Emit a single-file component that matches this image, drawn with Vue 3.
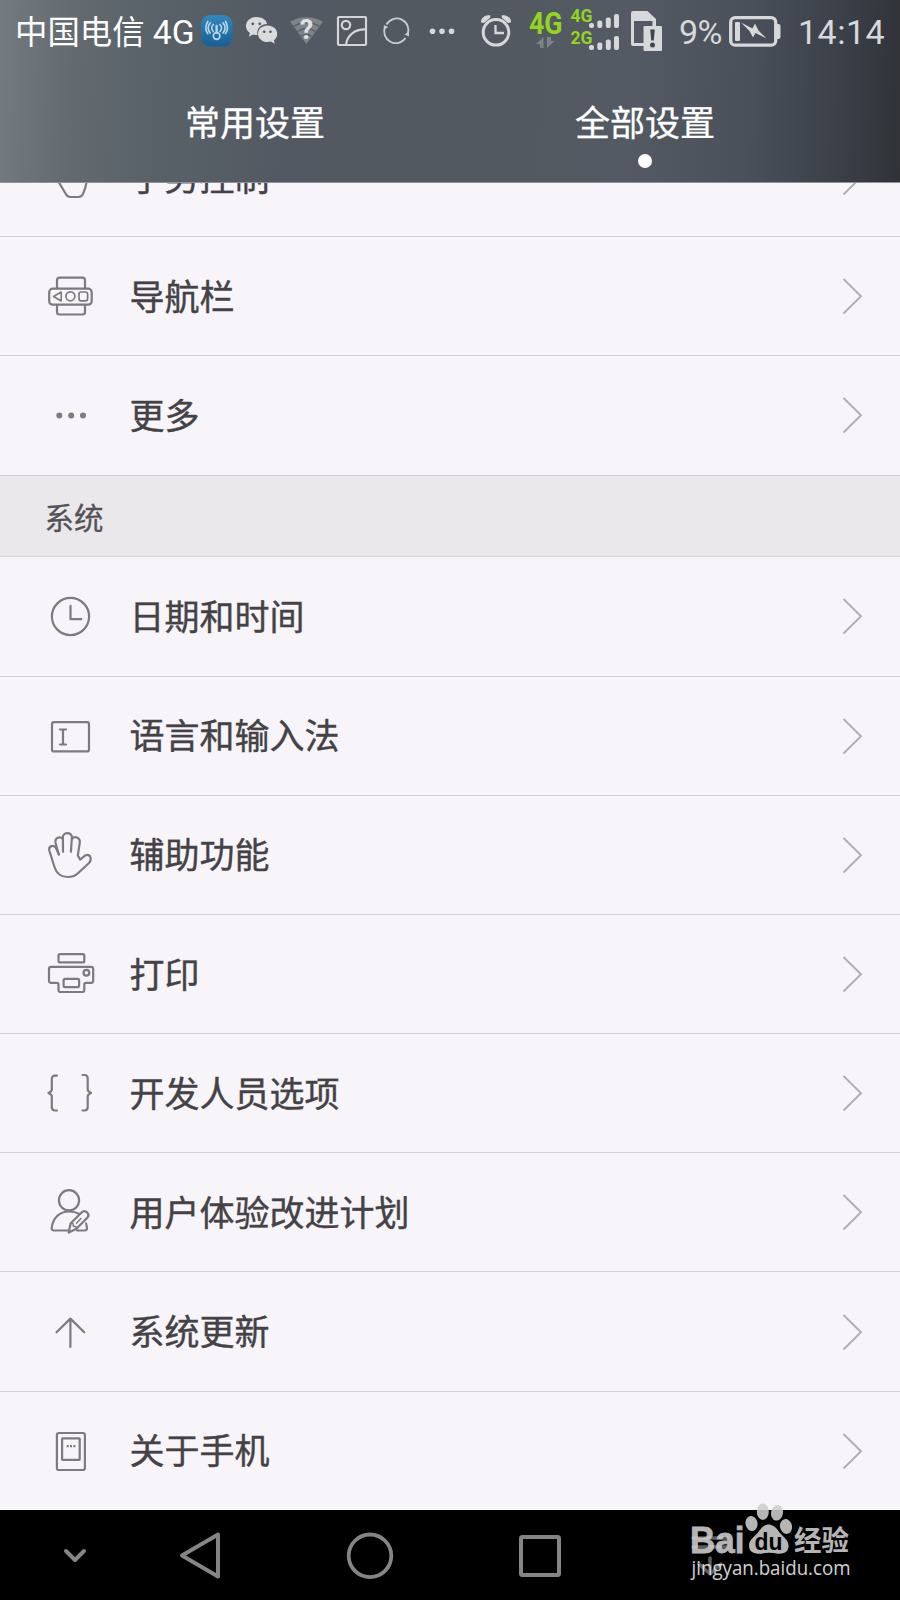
<!-- App.vue 系统设置 -->
<template>
  <div class="phone">
    <header class="header">
      <!-- 状态栏 -->
      <div class="status-bar">
        <span class="carrier">中国电信 <span class="latin">4G</span></span>

        <!-- 热点应用 -->
        <svg class="status-icon" width="40" height="62" viewBox="0 0 40 62">
          <defs>
            <linearGradient id="appBlue" x1="0" y1="0" x2="0" y2="1">
              <stop offset="0" stop-color="#3188bd" />
              <stop offset="1" stop-color="#175f96" />
            </linearGradient>
          </defs>
          <rect x="0" y="15" width="31.5" height="31.5" rx="9" fill="url(#appBlue)" />
          <g fill="none" stroke="#b9d6e8" stroke-width="1.7" stroke-linecap="round">
            <circle cx="15.6" cy="36" r="3.3" />
            <path d="M15.6 32.5V26" stroke-width="2.4" />
            <path d="M12.3 24.5c-2 2-2 5 0 7M9.3 22.8c-2.8 3-2.8 7.3 0 10.2M6.800 21.5c-2.600 4-2.600 9 0 12" />
            <path d="M19 24.5c2 2 2 5 0 7M22 22.8c2.8 3 2.8 7.3 0 10.2M24.500 21.5c2.600 4 2.600 9 0 12" />
          </g>
        </svg>

        <!-- 微信 -->
        <svg class="status-icon" width="48" height="62" viewBox="0 0 48 62">
          <path
            d="M15.5 17c-6 0-10.5 3.9-10.5 9 0 3 1.5 5.4 4 7l-1.2 3.8 4.300-2.300c1.5.4 3 .5 4.400.4-1.400-6.400 3.500-11 9.500-11C25.500 19.800 21 17 15.500 17z"
            fill="#d9dadc"
          />
          <path
            d="M26.5 25.5c-5.3 0-9.5 3.6-9.5 8.2s4.2 8.3 9.5 8.3c1.2 0 2.3-.2 3.4-.5l4 2.2-1-3.4c2-1.6 3.3-3.9 3.3-6.6 0-4.6-4.4-8.2-9.7-8.2z"
            fill="#d9dadc"
          />
          <g fill="#4f5760">
            <circle cx="11.8" cy="23.8" r="1.4" />
            <circle cx="18.8" cy="23.8" r="1.4" />
            <circle cx="23.2" cy="31.8" r="1.3" />
            <circle cx="29.5" cy="31.8" r="1.3" />
          </g>
        </svg>

        <!-- 无线网络 -->
        <svg class="status-icon" width="46" height="62" viewBox="0 0 46 62">
          <path d="M1 21.5Q17.5 13 34 21.5L17.5 44z" fill="#7d848a" />
          <g fill="none" stroke="#596169" stroke-width="1.4">
            <path d="M4.500 26.5Q17.5 18.5 30.5 26.5" />
            <path d="M8.500 31.5Q17.5 25.5 26.5 31.5" />
            <path d="M12 36.5Q17.5 32.5 23 36.5" />
          </g>
          <text class="wifi-mark" x="17.5" y="39">?</text>
        </svg>

        <!-- 图片 -->
        <svg class="status-icon" width="46" height="62" viewBox="0 0 46 62">
          <g fill="none" stroke="#d3d5d8" stroke-width="2.2">
            <rect x="3" y="17" width="28" height="28" rx="1" />
            <circle cx="11" cy="25" r="4.2" />
            <path d="M11 45C12 35 20 29 31 29.5" />
          </g>
        </svg>

        <!-- 同步 -->
        <svg class="status-icon" width="46" height="62" viewBox="0 0 46 62">
          <g fill="none" stroke="#c9ccd0" stroke-width="1.8">
            <path d="M5.5 24.5A11.7 11.7 0 0 1 26.6 34.5" />
            <path d="M24.5 38A11.7 11.7 0 0 1 4 27" />
          </g>
          <path d="M28 31.5v5l-4.500-2zM2.800 30l0-5 4.400 2z" fill="#c9ccd0" />
        </svg>

        <!-- 更多通知 -->
        <svg class="status-icon" width="52" height="62" viewBox="0 0 52 62">
          <g fill="#d6d8da">
            <circle cx="5.5" cy="31.2" r="2.8" />
            <circle cx="15" cy="31.2" r="2.8" />
            <circle cx="24.5" cy="31.2" r="2.8" />
          </g>
        </svg>

        <!-- 闹钟 -->
        <svg class="status-icon" width="50" height="62" viewBox="0 0 50 62">
          <g fill="none" stroke="#d6d8da">
            <circle cx="17" cy="32.3" r="12.8" stroke-width="3" />
            <path d="M16.5 25v8H25" stroke-width="2.3" />
          </g>
          <path d="M2 22.5C1.5 18 6.5 14 11.5 15.5L11 18 5 23z" fill="#d6d8da" />
          <path d="M32 22.5C32.5 18 27.5 14 22.5 15.5L23 18 29 23z" fill="#d6d8da" />
        </svg>

        <!-- 移动网络 -->
        <svg class="status-icon" width="41" height="62" viewBox="0 0 41 62">
          <text class="net-large" x="0" y="33.5" textLength="33.5" lengthAdjust="spacingAndGlyphs">4G</text>
          <path d="M14.5 37v11H11v-4H7zM18 37v11l7.5-7H22v-4z" fill="#7d8389" />
        </svg>

        <!-- 双卡信号 -->
        <svg class="status-icon" width="61" height="62" viewBox="0 0 61 62">
          <text class="net-small" x="0.5" y="22" textLength="22" lengthAdjust="spacingAndGlyphs">4G</text>
          <text class="net-small" x="0.5" y="43.7" textLength="22" lengthAdjust="spacingAndGlyphs">2G</text>
          <g fill="#d6d8da">
            <template v-for="top in [0, 22]" :key="top">
              <rect x="19" :y="top + 23" width="5" height="5" rx="2" />
              <rect x="27.3" :y="top + 20.5" width="5" height="7.5" rx="2" />
              <rect x="35.8" :y="top + 17.5" width="5" height="10.5" rx="2" />
              <rect x="44" :y="top + 14" width="5" height="14" rx="2" />
            </template>
          </g>
        </svg>

        <!-- SIM 卡提示 -->
        <svg class="status-icon" width="48" height="62" viewBox="0 0 48 62">
          <path d="M0 13a2 2 0 0 1 2-2h14.5L25 19v7h-3.500v-5H3v22h10v3H2a2 2 0 0 1-2-2z" fill="#d6d8da" />
          <rect x="12.5" y="26" width="18.5" height="25" rx="1" fill="#d6d8da" />
          <path d="M19.2 29.5h4.600l-1 11h-2.600z" fill="#3f464e" />
          <circle cx="21.5" cy="45" r="2.5" fill="#3f464e" />
        </svg>

        <span class="percent">9%</span>

        <!-- 电池 -->
        <svg class="status-icon" width="69" height="62" viewBox="0 0 69 62">
          <rect x="1.7" y="17.7" width="45" height="27.5" rx="4.5" fill="none" stroke="#d6d8da" stroke-width="3.3" />
          <path d="M48 24h1.5a2 2 0 0 1 2 2v11a2 2 0 0 1-2 2H48z" fill="#d6d8da" />
          <rect x="6" y="22" width="5" height="19" rx="1" fill="#d6d8da" />
          <path d="M12 22.5L23.5 28.5 26 23.5 29.5 30.5 37.5 38.5 26.5 33 24 37.5 20.5 31z" fill="#d6d8da" />
        </svg>

        <span class="clock">14:14</span>
      </div>

      <!-- 标签页 -->
      <nav class="tabs">
        <button
          v-for="tab in tabs"
          :key="tab.key"
          class="tab"
          :class="{ active: tab.key === activeTab }"
          @click="activeTab = tab.key"
        >
          {{ tab.label }}
          <i class="tab-dot"></i>
        </button>
      </nav>
    </header>

    <!-- 设置列表 -->
    <main class="settings">
      <section v-for="group in groups" :key="group.key" class="group" :class="group.key">
        <h2 v-if="group.title" class="group-title">{{ group.title }}</h2>
        <div v-for="item in group.items" :key="item.icon" class="row">
          <svg class="row-icon" width="64" height="64" viewBox="0 0 64 64">
            <g v-if="item.icon === 'gesture'">
              <path d="M20 37.6L27 49.3Q28.5 52 31.5 52H39.5Q43 52 44.2 48.5Q46.7 43 47.7 36V26Q44 23 41 25Q37 22 33 24V12Q30 9 27 12V33L20 29Q16 31 20 37.6Z" />
            </g>
            <g v-else-if="item.icon === 'navbar'">
              <path d="M18 24.5V16.5Q18 13.7 20.5 13.7H43.5Q46 13.7 46 16.5V24.5" />
              <path d="M18 41V48Q18 50.5 20.5 50.5H43.5Q46 50.5 46 48V41" />
              <rect x="10.2" y="24.7" width="42.5" height="16" rx="3.5" />
              <path d="M22.2 28V37L14.500 32.5Z" stroke-width="1.6" />
              <circle cx="31.4" cy="32.3" r="4.5" stroke-width="1.7" />
              <rect x="40" y="28" width="8.6" height="8.8" rx="2" stroke-width="1.7" />
            </g>
            <g v-else-if="item.icon === 'more'" class="solid">
              <circle cx="20.3" cy="32.5" r="3" />
              <circle cx="32.2" cy="32.5" r="3" />
              <circle cx="44" cy="32.5" r="3" />
            </g>
            <g v-else-if="item.icon === 'clock'">
              <circle cx="31.5" cy="32.5" r="18.6" />
              <path d="M31.5 21.8V35.2H42.3" />
            </g>
            <g v-else-if="item.icon === 'language'">
              <rect x="13" y="18.2" width="37" height="29.2" rx="2" />
              <path d="M21 25.5H27M24 25.5V40.5M21 40.5H27" />
            </g>
            <g v-else-if="item.icon === 'hand'">
              <path d="M20 31.5L17 25C15 21.2 9.2 23 10.3 27.5L15.5 44C17.5 50.5 22.5 54 28.7 54C33.5 54 37 52.3 39.5 49.8L50 40C53.5 36 51 31.7 48 31.9C45.5 32 43.5 35 41.2 36.7L38.8 32.5L40.8 19.5C41.3 14.2 35.5 12.8 32.9 16" />
              <path d="M24 28.8L23.9 14C24 8.8 33 8.8 32.9 14L31.9 28.8" />
              <path d="M19.7 31.5L16.6 20C15.5 14.6 21 12.8 24 16" />
            </g>
            <g v-else-if="item.icon === 'printer'">
              <rect x="19.5" y="12.2" width="25.8" height="8.2" rx="1.5" />
              <path d="M12.2 24.9H52Q54.2 24.9 54.2 27V38.5Q54.2 40.8 52 40.8H47Q45.3 40.8 45.3 42.5V48Q45.3 50 43.3 50H21.5Q19.5 50 19.5 48V42.5Q19.5 40.8 17.8 40.8H12.2Q10 40.8 10 38.5V27Q10 24.9 12.2 24.9Z" />
              <rect x="24.6" y="36.9" width="15.5" height="8.2" rx="1.5" />
              <circle cx="47.4" cy="30.8" r="2.9" />
            </g>
            <g v-else-if="item.icon === 'braces'">
              <path d="M18 14.6H16Q12.8 14.6 12.8 18V28.5Q12.8 30.5 9.5 32.1Q12.8 33.5 12.8 35.5V46Q12.8 49.5 16 49.5H18" />
              <path d="M43.5 14H45.5Q48.7 14 48.7 17.5V28.5Q48.7 30.5 52 32.1Q48.7 33.5 48.7 35.5V46Q48.7 49.5 45.5 49.5H43.5" />
            </g>
            <g v-else-if="item.icon === 'user'">
              <circle cx="30" cy="20.300" r="10.1" />
              <path d="M29.5 50.5H15Q12.5 50.5 12.7 48C14 37.5 21 31.5 30 31.5Q36 31.5 40.5 34M47 43.5Q48 46.5 48 49Q47.5 50.5 46 50.5H38" />
              <path d="M29.7 52.5L31.6 43.5L42.8 32.2C44.5 30.5 46.5 31 48 32.3C50 34.2 50 35.8 48.5 37.5L37.5 48.8Z" />
              <path d="M31.6 43.5L34 43.5L34.5 46.5L37 46.5L37.5 48.8M37.5 43.2L42 38.5" stroke-width="1.5" />
            </g>
            <g v-else-if="item.icon === 'update'">
              <path d="M31.4 47V18.6M17.5 32.3L31.4 18.6L45.2 32.3" />
            </g>
            <g v-else-if="item.icon === 'about'">
              <rect x="17.9" y="14" width="28" height="37" rx="2" />
              <rect x="23.1" y="19.3" width="17.6" height="21.5" rx="0.5" />
              <path d="M27.7 27.2h2M31 27.2h2M34.3 27.2h2" stroke-linecap="butt" />
            </g>
          </svg>
          <span class="row-label">{{ item.label }}</span>
          <svg class="chevron" width="22" height="38" viewBox="0 0 22 38">
            <path d="M1.500 2L19 19.200L1.500 36.500" />
          </svg>
        </div>
      </section>
    </main>

    <!-- 导航键 -->
    <footer class="nav-bar">
      <svg width="30" height="20" viewBox="0 0 30 20">
        <path d="M6 6L15 15L24 6" stroke-width="4" />
      </svg>
      <svg width="50" height="56" viewBox="0 0 50 56">
        <path d="M43 7.500V49.500L7 28.500Z" stroke-width="4" />
      </svg>
      <svg width="50" height="56" viewBox="0 0 50 56">
        <circle cx="25" cy="28.8" r="21.3" stroke-width="3.8" />
      </svg>
      <svg width="50" height="56" viewBox="0 0 50 56">
        <rect x="6" y="10" width="38" height="38" rx="1.5" stroke-width="4" />
      </svg>
      <svg class="drawer-key" width="50" height="56" viewBox="0 0 50 56">
        <path d="M8 11H42M8 20H42M25 31V47M14 37L25 47L36 37" stroke-width="3.5" />
      </svg>
    </footer>

    <!-- 水印 -->
    <svg class="watermark" width="180" height="90" viewBox="0 0 180 90">
      <text class="wm-brand" x="10" y="52.5" textLength="54.5" lengthAdjust="spacingAndGlyphs">Bai</text>
      <g class="wm-paw">
        <ellipse cx="71.5" cy="23.5" rx="6" ry="7.5" transform="rotate(-10 71.5 23.5)" />
        <ellipse cx="82.8" cy="11.8" rx="6" ry="8.2" />
        <ellipse cx="97" cy="12.8" rx="6" ry="7.8" transform="rotate(10 97 12.8)" />
        <ellipse cx="106" cy="26.5" rx="6" ry="7.5" transform="rotate(-12 106 26.5)" />
        <path d="M88.5 24.5C93.5 24.5 97 28.5 99.5 32.5C103 37 108.5 39.5 108.5 46C108.5 52 104 54 98 53.7C92 52.5 86 52.5 81 53.7C74.5 54 69 52.5 69 45.5C69 39.5 74.5 37 78 32.5C80.5 28.5 84 24.5 88.5 24.5Z" />
      </g>
      <text class="wm-du" x="74.5" y="49.5" textLength="28" lengthAdjust="spacingAndGlyphs">du</text>
      <text class="wm-cn" x="114" y="51" textLength="55" lengthAdjust="spacingAndGlyphs">经验</text>
      <text class="wm-url" x="11.5" y="74.5" textLength="159" lengthAdjust="spacingAndGlyphs">jingyan.baidu.com</text>
    </svg>
  </div>
</template>

<script setup>
import { ref } from 'vue'

const activeTab = ref('all')

const tabs = [
  { key: 'common', label: '常用设置' },
  { key: 'all', label: '全部设置' }
]

const groups = [
  {
    key: 'personal',
    items: [
      { icon: 'gesture', label: '手势控制' },
      { icon: 'navbar', label: '导航栏' },
      { icon: 'more', label: '更多' }
    ]
  },
  {
    key: 'system',
    title: '系统',
    items: [
      { icon: 'clock', label: '日期和时间' },
      { icon: 'language', label: '语言和输入法' },
      { icon: 'hand', label: '辅助功能' },
      { icon: 'printer', label: '打印' },
      { icon: 'braces', label: '开发人员选项' },
      { icon: 'user', label: '用户体验改进计划' },
      { icon: 'update', label: '系统更新' },
      { icon: 'about', label: '关于手机' }
    ]
  }
]
</script>

<style>
body {
  margin: 0;
}
</style>

<style scoped>
.phone {
  position: relative;
  display: flex;
  flex-direction: column;
  width: 900px;
  height: 1600px;
  overflow: hidden;
  background: #f7f5f9;
  font-family: Roboto, "Noto Sans CJK SC", sans-serif;
}

.header {
  flex: none;
  box-sizing: border-box;
  height: 183px;
  border-bottom: 1px solid #8f9196;
  background: linear-gradient(
    92deg,
    #737b80 0%,
    #636b71 8%,
    #596168 18%,
    #525962 32%,
    #525960 50%,
    #535a63 70%,
    #495059 83%,
    #3b4049 93%,
    #303237 100%
  );
}

/* 状态栏 */
.status-bar {
  display: flex;
  align-items: center;
  height: 62px;
  color: #d6d8da;
  white-space: nowrap;
}

.status-icon {
  flex: none;
}

.carrier {
  flex: none;
  box-sizing: border-box;
  width: 201px;
  padding-left: 15px;
  color: #fff;
  font-family: "Noto Sans CJK SC", sans-serif;
  font-size: 32.4px;
  line-height: 64px;
}

.latin {
  margin-left: 1px;
  font-family: Roboto, sans-serif;
  font-size: 33.5px;
}

.percent {
  flex: none;
  width: 50px;
  font-size: 34px;
  letter-spacing: -0.5px;
  line-height: 68px;
}

.clock {
  font-size: 34px;
  letter-spacing: 0.5px;
  line-height: 68px;
}

.percent,
.clock {
  padding-top: 2px;
}

.wifi-mark {
  fill: #e0e1e3;
  font: 700 27px Roboto, sans-serif;
  text-anchor: middle;
}

.net-large {
  fill: #93d421;
  font: 700 31px Roboto, sans-serif;
}

.net-small {
  fill: #93d421;
  font: 700 18.5px Roboto, sans-serif;
}

/* 标签页 */
.tabs {
  display: grid;
  grid-template-columns: 1fr 1fr;
  height: 120px;
  padding: 0 60px;
}

.tab {
  display: flex;
  flex-direction: column;
  align-items: center;
  gap: 8px;
  padding: 34px 0 0;
  border: 0;
  background: none;
  color: #fff;
  font-family: "Noto Sans CJK SC", sans-serif;
  font-size: 35px;
  line-height: 50px;
  -webkit-text-stroke: 0.3px;
}

.tab-dot {
  width: 14px;
  height: 14px;
  border-radius: 50%;
}

.tab.active .tab-dot {
  background: #fff;
}

/* 设置列表 */
.settings {
  flex: 1;
  min-height: 0;
  overflow: hidden;
}

/* 列表已向上滚动，首行只露出下半部分 */
.group.personal {
  margin-top: -65px;
}

.row {
  display: flex;
  align-items: center;
  box-sizing: border-box;
  height: 119.2px;
  padding: 0 36px 0 39px;
  border-bottom: 1px solid #d3d1d5;
}

.system .row:last-child {
  border-bottom-color: transparent;
}

.row-icon {
  flex: none;
  fill: none;
  stroke: #7d7b7f;
  stroke-width: 2.2;
  stroke-linecap: round;
  stroke-linejoin: round;
}

.row-icon .solid {
  fill: #7d7b7f;
  stroke: none;
}

.row-label {
  flex: 1;
  margin-left: 26.5px;
  padding-bottom: 3px;
  color: #444246;
  font-family: "Noto Sans CJK SC", sans-serif;
  font-size: 35px;
  line-height: 50px;
  -webkit-text-stroke: 0.4px;
}

.chevron {
  flex: none;
  fill: none;
  stroke: #b0aeb2;
  stroke-width: 1.9;
}

.group-title {
  box-sizing: border-box;
  height: 81.8px;
  margin: 0;
  padding-left: 44.5px;
  border-bottom: 1px solid #d6d4d8;
  background: #eae8eb;
  color: #545256;
  font-family: "Noto Sans CJK SC", sans-serif;
  font-size: 29.5px;
  font-weight: 400;
  line-height: 80px;
  -webkit-text-stroke: 0.3px;
}

/* 导航键 */
.nav-bar {
  flex: none;
  display: grid;
  grid-template-columns: 80px repeat(4, 170px);
  align-items: center;
  justify-items: center;
  box-sizing: border-box;
  height: 90px;
  padding-left: 35px;
  background: #000;
  fill: none;
  stroke: #858585;
  stroke-linecap: round;
  stroke-linejoin: round;
}

.drawer-key {
  opacity: 0.7;
}

/* 水印浮在导航键之上 */
.watermark {
  position: absolute;
  right: 40px;
  bottom: 10px;
  overflow: visible;
  opacity: 0.88;
}

.wm-brand {
  fill: #cfcfcf;
  font: 700 36px "Liberation Sans", sans-serif;
  stroke: #cfcfcf;
  stroke-width: 0.8;
}

.wm-paw {
  fill: #cfcfcf;
}

.wm-du {
  fill: #000;
  font: 700 23px "Liberation Sans", sans-serif;
}

.wm-cn {
  fill: #cfcfcf;
  font: 700 28px "Noto Sans CJK SC", sans-serif;
}

.wm-url {
  fill: #ededed;
  font: 400 20.5px "Open Sans", sans-serif;
}
</style>
